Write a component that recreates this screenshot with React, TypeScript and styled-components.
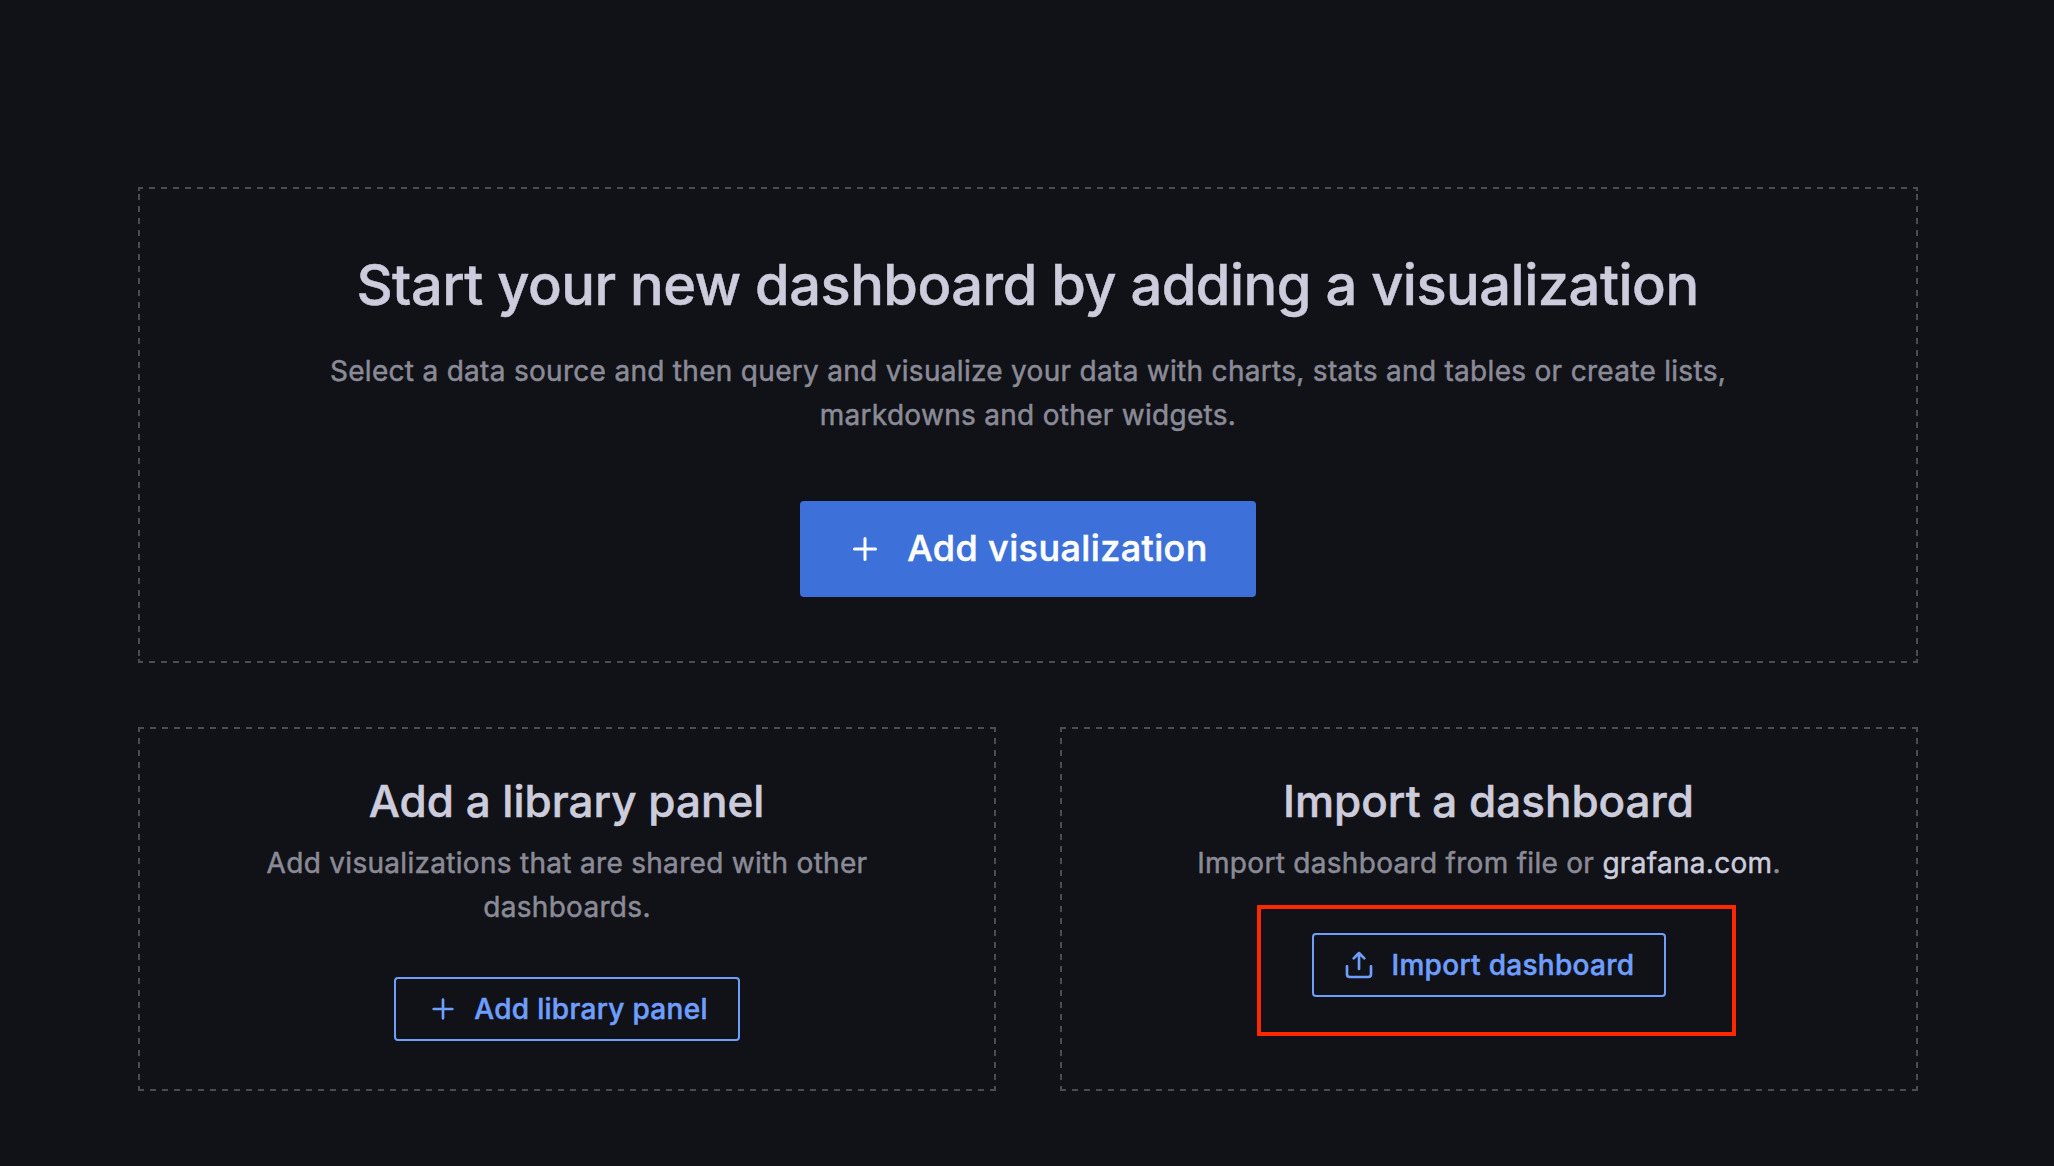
import React from 'react';
import styled, { createGlobalStyle, css } from 'styled-components';

const GlobalStyle = createGlobalStyle`
  *, *::before, *::after { box-sizing: border-box; }
  html, body { margin: 0; background: #111217; }
  body {
    font-family: Inter, 'Liberation Sans', sans-serif;
    font-size: 28px;
    line-height: 44px;
    letter-spacing: 0.01071em;
    font-optical-sizing: none;
    -webkit-font-smoothing: antialiased;
    -webkit-text-stroke: 0.5px currentColor;
    color: #ccccdc;
  }
`;

const Page = styled.main`
  display: flex;
  flex-direction: column;
  gap: 64px;
  width: 100%;
  height: 1166px;
  padding: 187px 136px 0 138px;
  background: #111217;
`;

const Row = styled.div`
  display: grid;
  grid-template-columns: 1fr 1fr;
  gap: 64px;
`;

const dash = '#4b4c51';

/* The dashed outline is 2px thick, 6px on and 6px off on every side. */
const Box = styled.section<{ $large?: boolean }>`
  --x: ${(p) => (p.$large ? '-1px' : '0px')};
  --y: ${(p) => (p.$large ? '-5px' : '-1px')};
  --across: linear-gradient(90deg, ${dash} 6px, transparent 6px);
  --down: linear-gradient(180deg, ${dash} 6px, transparent 6px);
  --corner: linear-gradient(${dash}, ${dash});
  display: flex;
  flex-direction: column;
  align-items: center;
  gap: ${(p) => (p.$large ? 64 : 48)}px;
  padding: ${(p) => (p.$large ? 66 : 50)}px;
  background:
    var(--across) var(--x) 0 / 12px 2px repeat-x,
    var(--across) var(--x) 100% / 12px 2px repeat-x,
    var(--down) 0 var(--y) / 2px 12px repeat-y,
    var(--down) 100% var(--y) / 2px 12px repeat-y,
    var(--corner) 0 0 / 2px 4px no-repeat,
    var(--corner) 100% 0 / 2px 4px no-repeat,
    var(--corner) 0 100% / 2px 4px no-repeat,
    var(--corner) 100% 100% / 2px 4px no-repeat;
  text-align: center;
`;

const Copy = styled.div<{ $gap: number }>`
  display: flex;
  flex-direction: column;
  align-items: center;
  gap: ${(p) => p.$gap}px;
`;

const Heading = styled.h1`
  margin: 0 1px 0 0;
  font-size: 56px;
  line-height: 64px;
  font-weight: 500;
  letter-spacing: -0.00893em;
`;

const SubHeading = styled.h3`
  margin: 0 1px 0 0;
  font-size: 44px;
  line-height: 48px;
  font-weight: 500;
  letter-spacing: 0;
`;

const Text = styled.p<{ $width: number }>`
  margin: 0;
  max-width: ${(p) => p.$width}px;
  color: #8b8b97;
`;

const Link = styled.a`
  color: #ccccdc;
  text-decoration: none;
`;

const Button = styled.button<{ $primary?: boolean; $width: number }>`
  display: inline-flex;
  align-items: center;
  justify-content: center;
  width: ${(p) => p.$width}px;
  height: 64px;
  padding: 0;
  gap: 16px;
  border: 2px solid #6e9fff;
  border-radius: 4px;
  background: transparent;
  color: #6e9fff;
  font: inherit;
  font-weight: 500;
  letter-spacing: 0.01071em;
  white-space: nowrap;
  cursor: pointer;
  ${(p) =>
    p.$primary &&
    css`
      height: 96px;
      padding: 0 1px 0 0;
      gap: 24px;
      border: 0;
      background: #3d71d9;
      color: #fff;
      font-size: 36px;
    `}
`;

const ButtonLabel = styled.span<{ $raised?: boolean }>`
  padding-bottom: ${(p) => (p.$raised ? 2 : 0)}px;
`;

const Icon = styled.svg<{ $size: number; $nudge: number }>`
  flex: none;
  width: ${(p) => p.$size}px;
  height: ${(p) => p.$size}px;
  margin: 0 ${(p) => -p.$nudge}px 0 ${(p) => p.$nudge}px;
  fill: currentColor;
`;

const ButtonSlot = styled.div`
  position: relative;
  display: flex;
`;

const Highlight = styled.div`
  position: absolute;
  top: -28px;
  left: -55px;
  width: 479px;
  height: 131px;
  border: 4px solid #ff2600;
  pointer-events: none;
`;

const PlusIcon = ({ size, nudge = 0 }: { size: number; nudge?: number }) => (
  <Icon $size={size} $nudge={nudge} viewBox="0 0 24 24">
    <path d="M19,11H13V5a1,1,0,0,0-2,0v6H5a1,1,0,0,0,0,2h6v6a1,1,0,0,0,2,0V13h6a1,1,0,0,0,0-2Z" />
  </Icon>
);

const UploadIcon = ({ size, nudge = 0 }: { size: number; nudge?: number }) => (
  <Icon $size={size} $nudge={nudge} viewBox="0 0 24 24">
    <path d="M8.71,7.71,11,5.41V15a1,1,0,0,0,2,0V5.41l2.29,2.3a1,1,0,0,0,1.42,0,1,1,0,0,0,0-1.42l-4-4a1,1,0,0,0-.33-.21,1,1,0,0,0-.76,0,1,1,0,0,0-.33.21l-4,4A1,1,0,1,0,8.71,7.71ZM21,12a1,1,0,0,0-1,1v6a1,1,0,0,1-1,1H5a1,1,0,0,1-1-1V13a1,1,0,0,0-2,0v6a3,3,0,0,0,3,3H19a3,3,0,0,0,3-3V13A1,1,0,0,0,21,12Z" />
  </Icon>
);

export default function App() {
  return (
    <>
      <GlobalStyle />
      <Page>
        <Box $large>
          <Copy $gap={32}>
            <Heading>Start your new dashboard by adding a visualization</Heading>
            <Text $width={1440}>
              Select a data source and then query and visualize your data with charts, stats and tables or create
              lists, markdowns and other widgets.
            </Text>
          </Copy>
          <Button $primary $width={456}>
            <PlusIcon size={36} />
            <ButtonLabel $raised>Add visualization</ButtonLabel>
          </Button>
        </Box>
        <Row>
          <Box>
            <Copy $gap={16}>
              <SubHeading>Add a library panel</SubHeading>
              <Text $width={640}>Add visualizations that are shared with other dashboards.</Text>
            </Copy>
            <Button $width={346}>
              <PlusIcon size={32} nudge={1} />
              <ButtonLabel>Add library panel</ButtonLabel>
            </Button>
          </Box>
          <Box>
            <Copy $gap={16}>
              <SubHeading>Import a dashboard</SubHeading>
              <Text $width={640}>
                Import dashboard from file or <Link href="#">grafana.com</Link>.
              </Text>
            </Copy>
            <ButtonSlot>
              <Button $width={354}>
                <UploadIcon size={32} nudge={-1} />
                <ButtonLabel>Import dashboard</ButtonLabel>
              </Button>
              <Highlight />
            </ButtonSlot>
          </Box>
        </Row>
      </Page>
    </>
  );
}
